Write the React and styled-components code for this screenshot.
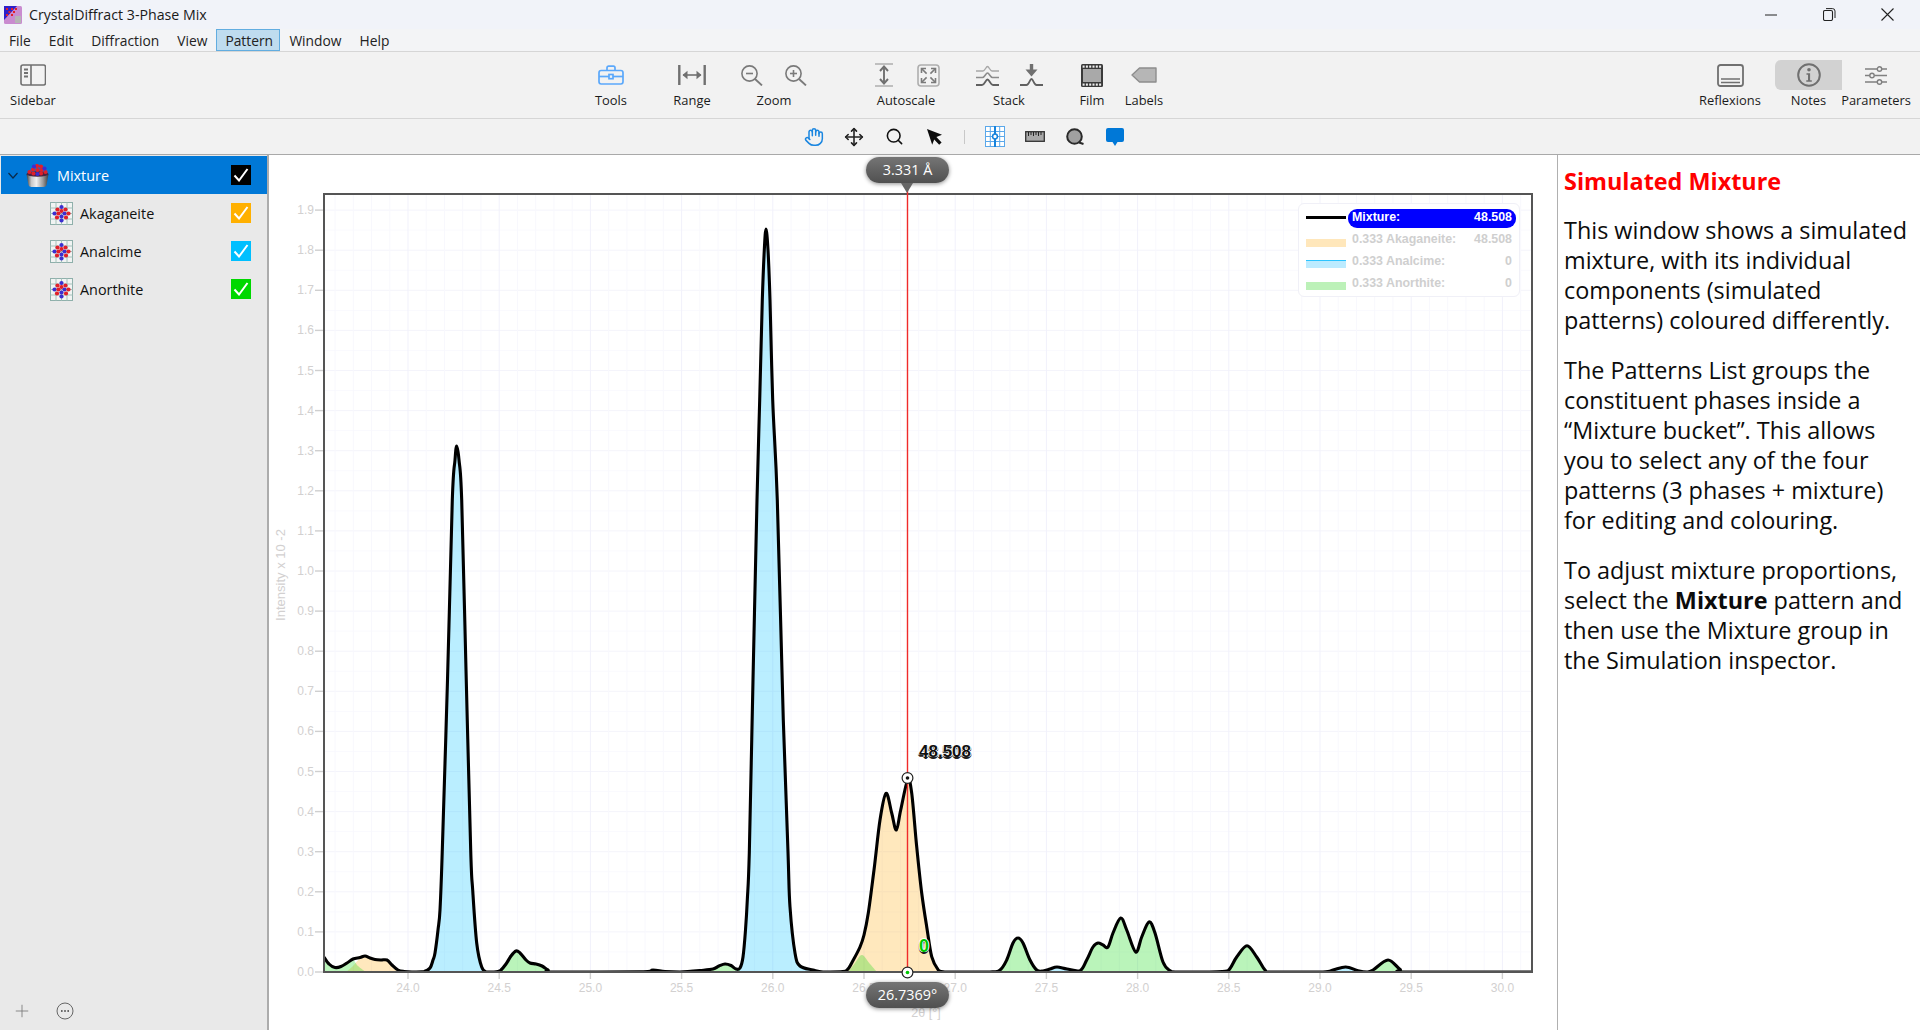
import React from "react";
import styled, { createGlobalStyle } from "styled-components";
import { Hand, Move, Search, Plus } from "lucide-react";

const UI = `"Open Sans", "Noto Sans", sans-serif`;
const ARIAL = `"Liberation Sans", Arial, sans-serif`;

const Global = createGlobalStyle`
  html, body { margin: 0; padding: 0; height: 100%; overflow: hidden; background: #fff; }
  #root { height: 100%; }
  * { box-sizing: border-box; }
`;

const Page = styled.div`
  width: 1920px; height: 1030px; display: flex; flex-direction: column;
  font-family: ${UI}; color: #111; overflow: hidden;
`;
const TitleBar = styled.div`
  height: 29px; flex: none; display: flex; align-items: center; padding: 0 4px;
  background: #f1f3f9;
`;
const AppIcon = styled.svg`width: 18px; height: 18px; flex: none; margin-right: 7px;`;
const TitleText = styled.div`font-size: 14.2px; color: #1a1a1a; flex: 1;`;
const WinBtn = styled.div`width: 58px; height: 29px; display: flex; align-items: center; justify-content: center;`;

const MenuBar = styled.div`
  height: 23px; flex: none; display: flex; background: #f3f4f6; border-bottom: 1px solid #d6d6d6;
`;
const MenuItem = styled.div`
  height: 22px; padding: 0 ${p => (p.$on ? "8px" : "9px")}; font-size: 13.8px; line-height: 23px;
  color: #222; flex: none;
  ${p => p.$on && "background:#bfdcef;border:1px solid #62ade0;line-height:21px;width:64px;"}
`;

const Toolbar = styled.div`
  height: 67px; flex: none; display: flex; padding: 8px 10px 0 6px; background: #f2f2f2;
  border-bottom: 1px solid #d6d6d6;
`;
const Tool = styled.div`
  width: ${p => p.$w}px; margin-left: ${p => p.$ml || 0}px; flex: none;
  display: flex; flex-direction: column; align-items: center;
`;
const ToolIcons = styled.div`
  height: 30px; width: 100%; display: flex; align-items: center; justify-content: center;
  gap: ${p => p.$gap || 0}px;
  ${p => p.$active && "background:#d2d2d2;border-radius:6px 0 0 6px;"}
`;
const ToolSlot = styled.div`width: 24px; display: flex; justify-content: center;`;
const ToolLabel = styled.div`font-size: 12.9px; line-height: 20px; color: #1b1b1b; white-space: nowrap;`;
const Spring = styled.div`flex: 1;`;

const SubBar = styled.div`
  height: 36px; flex: none; padding-left: 794px; display: flex; align-items: center; background: #f2f2f2;
  border-bottom: 1px solid #a9a9a9;
`;
const SubSlot = styled.div`width: 40px; flex: none; display: flex; justify-content: center; align-items: center;`;
const SubSep = styled.div`width: 1px; height: 14px; background: #c8c8c8; margin: 0 10px 0 10px;`;

const Main = styled.div`flex: 1; display: flex; min-height: 0;`;
const Sidebar = styled.div`
  width: 269px; flex: none; display: flex; flex-direction: column; background: #e9e9e9;
  border-right: 2px solid #acacac; padding: 1px 0 0 1px;
`;
const Row = styled.div`
  height: 38px; flex: none; display: flex; align-items: center; padding-left: ${p => (p.$sel ? 7 : 49)}px;
  background: ${p => (p.$sel ? "#0078d7" : "transparent")}; color: ${p => (p.$sel ? "#fff" : "#111")};
  font-size: 14.4px;
`;
const Chevron = styled.svg`width: 10px; height: 7px; margin-right: 8px; flex: none;`;
const RowIcon = styled.svg`width: 23px; height: 23px; flex: none; margin-right: ${p => p.$mr}px;`;
const CheckBox = styled.div`
  width: 20px; height: 20px; margin-left: auto; margin-right: 16px; background: ${p => p.$c};
  display: flex; align-items: center; justify-content: center;
`;
const SideFoot = styled.div`
  margin-top: auto; height: 38px; display: flex; align-items: center; padding: 0 0 0 11px; color: #777; gap: 24px;
`;

const ChartPanel = styled.div`width: 1288px; flex: none; position: relative; background: #fff;`;
const ChartSvg = styled.svg`width: 1288px; height: 875px; display: block;`;
const Bubble = styled.div`
  position: absolute; left: ${p => p.$left}px; top: ${p => p.$top}px; width: 83px; height: 26px;
  border-radius: 13px; background: linear-gradient(#757575, #505050); color: #fff;
  font-size: 14.4px; line-height: 26px; text-align: center; box-shadow: 0 1px 4px rgba(0,0,0,.45);
  &::after {
    content: ""; display: ${p => (p.$tail ? "block" : "none")}; position: absolute; left: 35px; top: 26px;
    border-left: 6px solid transparent; border-right: 6px solid transparent; border-top: 10px solid #666;
  }
`;
const ValueText = styled.div`
  position: absolute; left: ${p => p.$left}px; top: ${p => p.$top}px; font-family: ${ARIAL}; font-weight: 700;
  font-size: ${p => p.$size}px; line-height: 20px; color: ${p => p.$c};
  text-shadow: 1px 0 0 #fff, -1px 0 0 #fff, 0 -1px 0 #fff, 1px 1px 0 #222, -1px 1px 0 #222, 0 2px 0 #222;
`;
const Legend = styled.div`
  position: absolute; left: 1029px; top: 48px; width: 222px; height: 94px; padding: 5px 3px 0 7px;
  background: #fff; border: 1px solid #f0f0f7; border-radius: 6px;
  display: grid; grid-template-columns: 41px 1fr; grid-auto-rows: 22px; font-family: ${ARIAL};
  font-size: 12.4px; font-weight: 700; color: #cfcfcf;
`;
const Swatch = styled.div`
  width: 40px; height: 8px; margin-top: ${p => p.$mt}px; background: ${p => p.$c || "transparent"};
  ${p => p.$line && `border-top: ${p.$line};`}
`;
const LegendText = styled.div`
  height: 19px; padding: 0 4px 0 4px; display: flex; justify-content: space-between; line-height: 17px;
  margin-left: 1px; white-space: nowrap;
  ${p => p.$on && "background:#0000ff;color:#fff;border-radius:9px;"}
`;

const Notes = styled.div`flex: 1; border-left: 1px solid #b0b0b0; background: #fff; padding: 10px 0 0 6px; min-width: 0;`;
const NoteHead = styled.div`font-size: 23.4px; line-height: 32px; font-weight: 700; color: #f00; margin-bottom: 18px; white-space: nowrap;`;
const NotePara = styled.p`margin: 0 0 20px; font-size: 23.4px; line-height: 30px; color: #0c0c0c; white-space: nowrap;`;

/* ---------- chart data ---------- */
const BASE = 972;
const mix = [
  [324,957],[329,964],[335,967.5],[341,966.5],[347,963],[353,959],[360,957.5],[365,956],[370,958],[375,959.5],[381,960],[387,960],[392,965],[398,970],[404,971.5],[412,972],[424,971.5],
  [430,968],[433,960],[435,953],[438,930],[440,910],[442.3,850],[447.5,680],[452.3,500],[455,460],[456.7,446],[459,460],[461.7,500],[466,670],[470.7,850],[472.7,890],[476.7,943],[481.7,967],[486.7,972],
  [494,972],[498,971.5],[501,970],[506,964],[511,956],[516,951],[520,953],[526,960],[530,963],[536,964],[542,966],[548,970],[554,972],
  [640,971.8],[653,970],[665,971.5],[680,972],[700,970.5],[713,969],[719,966],[725,964],[731,965.5],[736,969],[740,968],
  [743,957],[745.5,930],[747.3,900],[749.3,853],[753,680],[757,500],[759.7,400],[762.3,300],[764.3,250],[766,229],[768,250],[770,300],[772.7,400],[777.3,500],[783.3,720],[788,852],[790,907],[795,953],[800,966],[813,970],[823,972],
  [843,971.5],[848,969],[851.7,963],[860,947],[864,935],[868.3,913],[874,870],[880,820],[886,793.3],[891.7,813],[896.3,830],[900.7,810],[907.7,780],[911.7,793],[916.7,846.7],[921.7,893],[926.7,926.7],[931.7,956.7],[938.3,970],[943,971.7],
  [955,972],[990,972],[1000,970],[1006.7,960],[1013,943],[1018,938],[1023,943],[1030,960],[1036.7,970],[1043,971],[1050,969],[1057,967],[1067,969],[1080,970.7],
  [1086.7,960],[1093,947],[1098,943],[1103,945],[1108,947],[1113,933],[1120.7,918],[1126.7,930],[1135.7,952],[1141.7,937],[1149,922],[1155,933],[1163,962],[1170,970.7],[1177,972],
  [1217,971.7],[1228,970.7],[1236.7,957],[1247,945.7],[1256.7,957],[1265,970],[1272,972],[1323,972],[1333,970],[1345.7,967],[1358,970.7],[1367,972],[1373,970],[1388,960],[1400,969.3],[1408,972],[1531,972],
];
const cr = (pts, move = true) => {
  let d = move ? `M${pts[0][0]} ${pts[0][1]}` : "";
  for (let i = 0; i < pts.length - 1; i++) {
    const p0 = pts[i - 1] || pts[i], p1 = pts[i], p2 = pts[i + 1], p3 = pts[i + 2] || p2;
    const c1x = p1[0] + (p2[0] - p0[0]) / 6, c1y = Math.min(BASE, p1[1] + (p2[1] - p0[1]) / 6);
    const c2x = p2[0] - (p3[0] - p1[0]) / 6, c2y = Math.min(BASE, p2[1] - (p3[1] - p1[1]) / 6);
    d += `C${c1x.toFixed(1)} ${c1y.toFixed(1)} ${c2x.toFixed(1)} ${c2y.toFixed(1)} ${p2[0]} ${p2[1]}`;
  }
  return d;
};
const seg = (a, b) => {
  const s = mix.filter(p => p[0] >= a && p[0] <= b);
  return `M${s[0][0]} ${BASE}L${s[0][0]} ${s[0][1]}` + cr(s, false) + `L${s[s.length - 1][0]} ${BASE}Z`;
};
const area = pts => `M${pts[0][0]} ${BASE}L${pts[0][0]} ${pts[0][1]}` + cr(pts, false) + `L${pts[pts.length - 1][0]} ${BASE}Z`;

const BLUE = ["#00bfff", 0.27], ORANGE = ["#ffa800", 0.26], GREEN = ["#00d800", 0.27];
const fills = [
  { d: seg(424, 494), c: BLUE }, { d: seg(736, 843), c: BLUE }, { d: seg(1036, 1086), c: BLUE }, { d: seg(1323, 1367), c: BLUE },
  { d: seg(843, 955), c: ORANGE },
  { d: area([[346,972],[353,966],[360,958],[365,956],[370,958],[375,959.5],[381,960],[387,960],[392,965],[398,970],[404,972]]), c: ORANGE },
  { d: area([[324,957],[329,964],[335,967.5],[341,966.5],[347,963],[353,960],[358,966],[366,972]]), c: GREEN },
  { d: seg(498, 554), c: GREEN }, { d: seg(700, 740), c: GREEN }, { d: seg(990, 1036.7), c: GREEN },
  { d: seg(1080, 1177), c: GREEN }, { d: seg(1217, 1272), c: GREEN }, { d: seg(1367, 1408), c: GREEN },
  { d: area([[848,972],[855,963],[862,955],[870,964],[877,972]]), c: GREEN },
];

const XT = v => 408 + (v - 24) * 182.4;
const YT = v => 972 - v * 401;
const range = (n, f) => Array.from({ length: n }, (_, i) => f(i));

const Chart = () => (
  <ChartSvg viewBox="269 155 1288 875">
    <defs><clipPath id="plot"><rect x="324" y="194" width="1208" height="778" /></clipPath></defs>
    <g clipPath="url(#plot)">
      {range(40, i => 20 * i).map(o => (
        <line key={"h" + o} x1="324" x2="1532" y1={972 - o * 1.0025} y2={972 - o * 1.0025} stroke={o % 40 === 0 ? "#f4f4fb" : "#fafafe"} />
      ))}
      {range(68, i => i - 5).map(k => (
        <line key={"v" + k} x1={XT(24 + k * 0.1)} x2={XT(24 + k * 0.1)} y1="194" y2="972" stroke={k % 5 === 0 ? "#f1f1fb" : "#f8f8fd"} />
      ))}
      {fills.map((f, i) => <path key={i} d={f.d} fill={f.c[0]} fillOpacity={f.c[1]} />)}
      <path d={cr(mix)} fill="none" stroke="#000" strokeWidth="3.1" strokeLinejoin="round" />
    </g>
    <rect x="324" y="194" width="1208" height="778" fill="none" stroke="#555" strokeWidth="2" />
    {range(20, i => i).map(i => (
      <g key={"y" + i}>
        <line x1="315" x2="323" y1={YT(i / 10)} y2={YT(i / 10)} stroke="#cfcfcf" strokeWidth="1.4" />
        <text x="314" y={YT(i / 10) + 4} textAnchor="end" fontFamily={ARIAL} fontSize="12" fill="#d2d0d0">{(i / 10).toFixed(1)}</text>
      </g>
    ))}
    {range(13, i => 24 + i * 0.5).map(v => (
      <g key={"x" + v}>
        <line x1={XT(v)} x2={XT(v)} y1="973" y2="979" stroke="#cfcfcf" strokeWidth="1.4" />
        <text x={XT(v)} y="992" textAnchor="middle" fontFamily={ARIAL} fontSize="12" fill="#d2d0d0">{v.toFixed(1)}</text>
      </g>
    ))}
    <text transform="translate(285 575) rotate(-90)" textAnchor="middle" fontFamily={ARIAL} fontSize="13" fill="#d2d0d0">Intensity x 10 -2</text>
    <text x="926" y="1017" textAnchor="middle" fontFamily={ARIAL} fontSize="12.5" fill="#d2d0d0">2θ [°]</text>
    <line x1="907.5" x2="907.5" y1="190" y2="972" stroke="#f02a2a" strokeWidth="1.4" />
    <circle cx="907.5" cy="778" r="5.4" fill="#fff" stroke="#222" strokeWidth="1.2" />
    <circle cx="907.5" cy="778" r="1.8" fill="#111" />
    <circle cx="907.5" cy="972.5" r="5.4" fill="#fff" stroke="#222" strokeWidth="1.2" />
    <circle cx="907.5" cy="972.5" r="1.8" fill="#00c800" />
  </ChartSvg>
);

/* ---------- icons ---------- */
const G = "#707070";
const ico = (w, h, children) => <svg width={w} height={h} viewBox={`0 0 ${w} ${h}`} fill="none">{children}</svg>;

const IconSidebar = () => ico(26, 22, <>
  <rect x="1" y="1" width="24.5" height="20" rx="2" stroke={G} strokeWidth="1.6" />
  <line x1="11" y1="1" x2="11" y2="21" stroke={G} strokeWidth="1.6" />
  <path d="M4 5.5h4M4 9h4M4 12.5h4" stroke={G} strokeWidth="1.8" />
</>);
const IconTools = () => ico(26, 20, <g stroke="#5ba8fb" strokeWidth="1.7">
  <rect x="1" y="5.5" width="24" height="13.5" rx="2.2" />
  <path d="M9 5.5V2.8c0-1 .7-1.7 1.6-1.7h4.8c.9 0 1.6.7 1.6 1.7v2.7" />
  <path d="M1 11.5h24" />
  <rect x="11" y="9.5" width="4" height="4.2" fill="#f2f2f2" />
</g>);
const IconRange = () => ico(28, 20, <>
  <path d="M1.3 0v20M26.7 0v20" stroke={G} strokeWidth="2.4" />
  <path d="M5 10h18" stroke={G} strokeWidth="1.6" />
  <path d="M9.5 5.8 4.5 10l5 4.2zM18.5 5.8 23.5 10l-5 4.2z" fill={G} />
</>);
const IconZoom = ({ plus }) => ico(22, 21, <g stroke="#7a7a7a" strokeWidth="1.6">
  <circle cx="8.5" cy="8.5" r="7.6" />
  <path d="M14 14l7 6.4" strokeWidth="1.9" />
  <path d="M5 8.5h7" />
  {plus && <path d="M8.5 5v7" />}
</g>);
const IconAuto1 = () => ico(18, 24, <>
  <path d="M0 1h18M0 23h18" stroke="#aeaeae" strokeWidth="1.6" />
  <path d="M9 4v16" stroke={G} strokeWidth="1.9" />
  <path d="M5 8l4-4.5L13 8M5 16l4 4.5 4-4.5" stroke={G} strokeWidth="1.9" />
</>);
const IconAuto2 = () => ico(23, 23, <>
  <rect x="1" y="1" width="21" height="21" rx="3" stroke="#aeaeae" strokeWidth="1.6" />
  <path d="M5 5l4.6 4.6M18 5l-4.6 4.6M5 18l4.6-4.6M18 18l-4.6-4.6" stroke="#7a7a7a" strokeWidth="1.6" />
  <path d="M4.5 9V4.5H9M14 4.5h4.5V9M4.5 14v4.5H9M14 18.5h4.5V14" stroke="#7a7a7a" strokeWidth="1.6" />
</>);
const IconStack1 = () => ico(23, 21, <>
  <path d="M0 6h7c2 0 3-4.5 4.5-4.5S14 6 16 6h7" stroke="#a8a8a8" strokeWidth="1.4" />
  <path d="M0 12.5h6.5c2.4 0 3.2-4.5 5-4.5s2.6 4.5 5 4.5H23" stroke="#8c8c8c" strokeWidth="1.5" />
  <path d="M0 20h6c2.6 0 3.6-5.5 5.5-5.5S14.5 20 17 20h6" stroke="#606060" strokeWidth="1.8" />
</>);
const IconStack2 = () => ico(23, 22, <>
  <path d="M11.5 0v6" stroke={G} strokeWidth="3.4" />
  <path d="M5.5 5.5h12l-6 7z" fill={G} />
  <path d="M0 21h6.5c2.5 0 3.3-6 5-6s2.5 6 5 6H23" stroke="#606060" strokeWidth="1.8" />
</>);
const IconFilm = () => ico(22, 23, <>
  <rect x="0" y="0" width="22" height="23" rx="1.5" fill="#3a3a3a" />
  <rect x="2" y="5" width="18" height="13" fill="#a9a9a9" />
  {range(6, i => 1.6 + i * 3.3).map(x => <g key={x}><rect x={x} y="1.5" width="2" height="2.2" fill="#eee" /><rect x={x} y="19.5" width="2" height="2.2" fill="#eee" /></g>)}
</>);
const IconTag = () => ico(26, 16, <path d="M25 1H8.5L1 8l7.5 7H25z" fill="#b6b6b6" stroke="#8d8d8d" strokeWidth="1.4" strokeLinejoin="round" />);
const IconReflex = () => ico(27, 23, <>
  <rect x="1" y="1" width="25" height="21" rx="2.5" stroke={G} strokeWidth="1.8" />
  <path d="M4 15h19M4 18.5h19" stroke={G} strokeWidth="1.5" />
</>);
const IconInfo = () => ico(24, 24, <>
  <circle cx="12" cy="12" r="10.8" stroke={G} strokeWidth="2" />
  <circle cx="12" cy="6.8" r="1.8" fill={G} />
  <path d="M9.5 10.3h3.6v7h1.7v1.4H9.3v-1.4H11v-5.6H9.5z" fill={G} />
</>);
const IconParams = () => ico(22, 19, <g stroke="#808080" strokeWidth="1.4">
  <path d="M0 3h22M0 9.5h22M0 16h22" />
  <circle cx="14.5" cy="3" r="2.2" fill="#f2f2f2" />
  <circle cx="7" cy="9.5" r="2.2" fill="#f2f2f2" />
  <circle cx="14.5" cy="16" r="2.2" fill="#f2f2f2" />
</g>);
const IconArrow = () => ico(17, 17, <path d="M1 1l15 5.8-5.6 2.3 5.2 5.3-2.4 2.4-5-5.4-2 5.4z" fill="#0b0b0b" />);
const IconGrid = () => ico(20, 21, <>
  <rect x=".5" y=".5" width="19" height="20" fill="#fff" stroke="#5ba8ea" />
  <path d="M5.3 0v21M14.7 0v21M0 5.5h20M0 10.5h20M0 15.5h20" stroke="#5ba8ea" />
  <path d="M10 0v21" stroke="#1783dc" strokeWidth="2" />
  <circle cx="10" cy="10.5" r="2.4" fill="#fff" stroke="#1783dc" strokeWidth="1.5" />
</>);
const IconRuler = () => ico(20, 11, <>
  <rect x=".7" y=".7" width="18.6" height="9.6" fill="#a8a8a8" stroke="#333" strokeWidth="1.3" />
  <path d="M3.5 1v4M6 1v3M8.5 1v4M11 1v3M13.5 1v4M16 1v3" stroke="#222" />
</>);
const IconLasso = () => ico(18, 17, <>
  <circle cx="8.5" cy="8.5" r="7.3" fill="#a0a0a0" stroke="#2a2a2a" strokeWidth="2" />
  <path d="M13 14.5 17.5 16" stroke="#2a2a2a" strokeWidth="2" />
</>);
const IconComment = () => ico(18, 18, <path d="M2 0h14a2 2 0 0 1 2 2v10a2 2 0 0 1-2 2h-4.5L9 18l-2.5-4H2a2 2 0 0 1-2-2V2a2 2 0 0 1 2-2z" fill="#0078d7" />);

const balls = [[11.5,5,"#3b2ed0"],[7.5,7.5,"#e0202a"],[15.5,7.5,"#e0202a"],[11.5,9,"#e0202a"],[4.5,11.5,"#3b2ed0"],[8.5,11.5,"#e0202a"],[14.5,11.5,"#3b2ed0"],[18.5,11.5,"#e0202a"],[7,15.5,"#e0202a"],[11.5,14.5,"#3b2ed0"],[16,15.5,"#e0202a"],[11.5,18.5,"#3b2ed0"]];
const CrystalIcon = () => (
  <RowIcon viewBox="0 0 23 23" $mr={7}>
    <rect x=".5" y=".5" width="22" height="22" fill="#f1f4f3" stroke="#8fb0ab" />
    <path d="M6 0v23M11.5 0v23M17 0v23M0 6h23M0 11.5h23M0 17h23" stroke="#9dbbb6" strokeWidth=".9" />
    {balls.map(([x, y, c], i) => <circle key={i} cx={x} cy={y} r="2.1" fill={c} />)}
  </RowIcon>
);
const BucketIcon = () => (
  <RowIcon viewBox="0 0 23 23" $mr={8}>
    <defs><linearGradient id="metal" x1="0" x2="1" y1="0" y2="0">
      <stop offset="0" stopColor="#3c3c3c" /><stop offset=".22" stopColor="#c8c8c8" /><stop offset=".45" stopColor="#f0f0f0" /><stop offset=".75" stopColor="#9a9a9a" /><stop offset="1" stopColor="#3c3c3c" />
    </linearGradient></defs>
    <path d="M.5 10h22l-2 11c-.3 1.3-1.5 2-3 2h-12c-1.5 0-2.7-.7-3-2z" fill="url(#metal)" />
    <ellipse cx="11.5" cy="10" rx="11" ry="2.8" fill="#4a2340" />
    {[[3.5,8,"#e0202a"],[7,5.5,"#e0202a"],[11,2,"#e0202a"],[15,2.5,"#e0202a"],[15.5,6,"#e0202a"],[19.5,8,"#e0202a"],[7.5,9.5,"#e0202a"],[11.5,6,"#e0202a"],[15,9.5,"#e0202a"],[11.5,10,"#3b2ed0"],[8,2.5,"#3b2ed0"],[18.5,4.5,"#3b2ed0"]].map(([x, y, c], i) => <circle key={i} cx={x} cy={y} r="2.1" fill={c} />)}
  </RowIcon>
);
const Check = () => <svg width="16" height="14" viewBox="0 0 16 14" fill="none"><path d="M1.5 7.5 6 12.5 14.5 1" stroke="#fff" strokeWidth="2" /></svg>;

const menus = ["File", "Edit", "Diffraction", "View", "Pattern", "Window", "Help"];
const patterns = [["Akaganeite", "#ffb000"], ["Analcime", "#00bfff"], ["Anorthite", "#00d800"]];
const legendRows = [
  { name: "0.333 Akaganeite:", val: "48.508", c: "#ffe7bb", mt: 8 },
  { name: "0.333 Analcime:", val: "0", c: "#bcebff", mt: 7, line: "1.5px solid #2cc4ff" },
  { name: "0.333 Anorthite:", val: "0", c: "#bcf1b8", mt: 7 },
];

export default function App() {
  return (
    <Page>
      <Global />
      <TitleBar>
        <AppIcon viewBox="0 0 18 18">
          <rect width="18" height="18" rx="1.5" fill="#c98bd0" />
          <path d="M0 0h13L0 14z" fill="#2d1fc9" />
          <path d="M2 2h2v2H2zM7 2h2v2H7zM11 2h2v2h-2zM4.5 5h2v2h-2zM9 5h2v2H9zM2 8h2v2H2zM7 8h2v2H7z" fill="#e0202a" />
          <rect x="11" y="10" width="6" height="7" fill="#b5b5b5" />
        </AppIcon>
        <TitleText>CrystalDiffract 3-Phase Mix</TitleText>
        <WinBtn><svg width="12" height="2"><line x1="0" y1="1" x2="12" y2="1" stroke="#222" /></svg></WinBtn>
        <WinBtn><svg width="13" height="13" fill="none" stroke="#222"><rect x=".5" y="2.5" width="9" height="10" rx="1.5" strokeWidth="1.1" /><path d="M3 .6h6.5a2.5 2.5 0 0 1 2.5 2.5V10" /></svg></WinBtn>
        <WinBtn><svg width="13" height="13" stroke="#222" strokeWidth="1.1"><path d="M.5.5l12 12M12.5.5l-12 12" /></svg></WinBtn>
      </TitleBar>
      <MenuBar>
        {menus.map(m => <MenuItem key={m} $on={m === "Pattern"}>{m}</MenuItem>)}
      </MenuBar>
      <Toolbar>
        <Tool $w={54}><ToolIcons><IconSidebar /></ToolIcons><ToolLabel>Sidebar</ToolLabel></Tool>
        <Tool $w={60} $ml={521}><ToolIcons><IconTools /></ToolIcons><ToolLabel>Tools</ToolLabel></Tool>
        <Tool $w={60} $ml={21}><ToolIcons><IconRange /></ToolIcons><ToolLabel>Range</ToolLabel></Tool>
        <Tool $w={84} $ml={10}><ToolIcons $gap={20}><ToolSlot><IconZoom /></ToolSlot><ToolSlot><IconZoom plus /></ToolSlot></ToolIcons><ToolLabel>Zoom</ToolLabel></Tool>
        <Tool $w={84} $ml={48}><ToolIcons $gap={20}><ToolSlot><IconAuto1 /></ToolSlot><ToolSlot><IconAuto2 /></ToolSlot></ToolIcons><ToolLabel>Autoscale</ToolLabel></Tool>
        <Tool $w={84} $ml={19}><ToolIcons $gap={20}><ToolSlot><IconStack1 /></ToolSlot><ToolSlot><IconStack2 /></ToolSlot></ToolIcons><ToolLabel>Stack</ToolLabel></Tool>
        <Tool $w={52} $ml={15}><ToolIcons><IconFilm /></ToolIcons><ToolLabel>Film</ToolLabel></Tool>
        <Tool $w={52}><ToolIcons><IconTag /></ToolIcons><ToolLabel>Labels</ToolLabel></Tool>
        <Spring />
        <Tool $w={80}><ToolIcons><IconReflex /></ToolIcons><ToolLabel>Reflexions</ToolLabel></Tool>
        <Tool $w={67} $ml={5}><ToolIcons $active><IconInfo /></ToolIcons><ToolLabel>Notes</ToolLabel></Tool>
        <Tool $w={68}><ToolIcons><IconParams /></ToolIcons><ToolLabel>Parameters</ToolLabel></Tool>
      </Toolbar>
      <SubBar>
        <SubSlot><Hand size={20} color="#1a86e0" strokeWidth={1.8} /></SubSlot>
        <SubSlot><Move size={20} color="#222" strokeWidth={1.9} /></SubSlot>
        <SubSlot><Search size={19} color="#111" strokeWidth={2} /></SubSlot>
        <SubSlot><IconArrow /></SubSlot>
        <SubSep />
        <SubSlot><IconGrid /></SubSlot>
        <SubSlot><IconRuler /></SubSlot>
        <SubSlot><IconLasso /></SubSlot>
        <SubSlot><IconComment /></SubSlot>
      </SubBar>
      <Main>
        <Sidebar>
          <Row $sel>
            <Chevron viewBox="0 0 10 7" fill="none"><path d="M.5 1 5 6l4.5-5" stroke="#0a2a4a" strokeWidth="1.2" /></Chevron>
            <BucketIcon />
            Mixture
            <CheckBox $c="#000"><Check /></CheckBox>
          </Row>
          {patterns.map(([n, c]) => (
            <Row key={n}>
              <CrystalIcon />
              {n}
              <CheckBox $c={c}><Check /></CheckBox>
            </Row>
          ))}
          <SideFoot>
            <Plus size={20} strokeWidth={1} />
            <svg width="18" height="18" viewBox="0 0 18 18" fill="none" stroke="#666"><circle cx="9" cy="9" r="8" /><path d="M5 9h1.6M8.2 9h1.6M11.4 9H13" strokeWidth="2" /></svg>
          </SideFoot>
        </Sidebar>
        <ChartPanel>
          <Chart />
          <Bubble $left={597} $top={2} $tail>3.331 Å</Bubble>
          <Bubble $left={597} $top={827}>26.7369°</Bubble>
          <ValueText $left={650} $top={587} $size={17} $c="#111">48.508</ValueText>
          <ValueText $left={650} $top={781} $size={18} $c="#00c800">0</ValueText>
          <Legend>
            <Swatch $mt={7} $line="3px solid #000" />
            <LegendText $on><span>Mixture:</span><span>48.508</span></LegendText>
            {legendRows.map(r => (
              <React.Fragment key={r.name}>
                <Swatch $mt={r.mt} $c={r.c} $line={r.line} />
                <LegendText><span>{r.name}</span><span>{r.val}</span></LegendText>
              </React.Fragment>
            ))}
          </Legend>
        </ChartPanel>
        <Notes>
          <NoteHead>Simulated Mixture</NoteHead>
          <NotePara>This window shows a simulated<br />mixture, with its individual<br />components (simulated<br />patterns) coloured differently.</NotePara>
          <NotePara>The Patterns List groups the<br />constituent phases inside a<br />“Mixture bucket”. This allows<br />you to select any of the four<br />patterns (3 phases + mixture)<br />for editing and colouring.</NotePara>
          <NotePara>To adjust mixture proportions,<br />select the <b>Mixture</b> pattern and<br />then use the Mixture group in<br />the Simulation inspector.</NotePara>
        </Notes>
      </Main>
    </Page>
  );
}
